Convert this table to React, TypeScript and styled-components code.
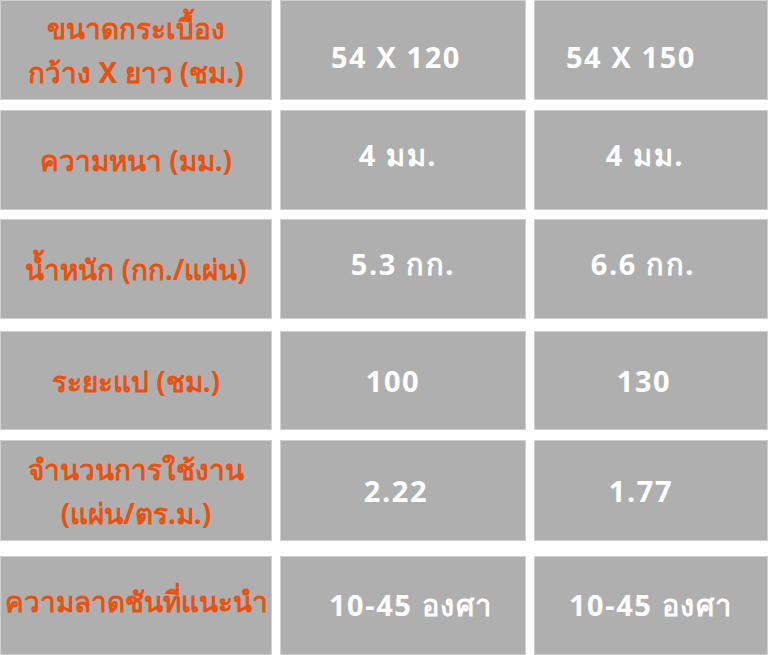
import styled, { createGlobalStyle } from "styled-components";

const GlobalStyle = createGlobalStyle`
  html, body {
    margin: 0;
    padding: 0;
    background: #ffffff;
  }
`;

const Table = styled.div`
  width: 768px;
  height: 655px;
  display: flex;
  flex-direction: column;
  background-color: #ffffff;
  overflow: hidden;
`;

const Row = styled.div<{ $top: number; $h: number }>`
  display: grid;
  grid-template-columns: 272px 246px 1fr;
  column-gap: 8px;
  margin-top: ${(p) => p.$top}px;
  height: ${(p) => p.$h}px;
`;

const Cell = styled.div<{ $dx?: number; $dy?: number }>`
  display: flex;
  flex-direction: column;
  justify-content: center;
  align-items: center;
  background-color: #afafaf;
  box-shadow: inset 0 0 0 1px #cfcfcf;
  padding-left: ${(p) => (p.$dx && p.$dx > 0 ? p.$dx * 2 : 0)}px;
  padding-right: ${(p) => (p.$dx && p.$dx < 0 ? -p.$dx * 2 : 0)}px;
  padding-top: ${(p) => (p.$dy && p.$dy > 0 ? p.$dy * 2 : 0)}px;
  padding-bottom: ${(p) => (p.$dy && p.$dy < 0 ? -p.$dy * 2 : 0)}px;
`;

const Label = styled.span`
  font-family: "Noto Sans", "Open Sans", sans-serif;
  font-weight: 700;
  font-size: 28px;
  line-height: 44px;
  color: #e8520f;
  white-space: nowrap;
`;

const Value = styled.span`
  font-family: "Open Sans", "Noto Sans", sans-serif;
  font-weight: 700;
  font-size: 29px;
  letter-spacing: 1.6px;
  color: #ffffff;
  white-space: nowrap;
`;

type RowData = {
  top: number;
  h: number;
  label: string[];
  a: string;
  b: string;
  dy?: number;
  labelDy?: number;
  adx?: number;
  bdx?: number;
};

const rows: RowData[] = [
  { top: 0, h: 100, label: ["ขนาดกระเบื้อง", "กว้าง X ยาว (ชม.)"], a: "54 X 120", b: "54 X 150", dy: 6, adx: -7, bdx: -20 },
  { top: 10, h: 100, label: ["ความหนา (มม.)"], a: "4 มม.", b: "4 มม.", dy: -4, adx: -5, bdx: -6 },
  { top: 9, h: 100, label: ["น้ำหนัก (กก./แผ่น)"], a: "5.3 กก.", b: "6.6 กก.", dy: -4, bdx: -8 },
  { top: 12, h: 99, label: ["ระยะแป (ชม.)"], a: "100", b: "130", adx: -10, bdx: -7 },
  { top: 10, h: 101, label: ["จำนวนการใช้งาน", "(แผ่น/ตร.ม.)"], a: "2.22", b: "1.77", adx: -7, bdx: -10 },
  { top: 15, h: 99, label: ["ความลาดชันที่แนะนำ"], a: "10-45 องศา", b: "10-45 องศา", labelDy: -5, adx: 8 },
];

const App = () => {
  return (
    <>
      <GlobalStyle />
      <Table>
        {rows.map((r, i) => (
          <Row key={i} $top={r.top} $h={r.h}>
            <Cell $dy={r.labelDy}>
              {r.label.map((l) => (
                <Label key={l}>{l}</Label>
              ))}
            </Cell>
            <Cell $dx={r.adx} $dy={r.dy}>
              <Value>{r.a}</Value>
            </Cell>
            <Cell $dx={r.bdx} $dy={r.dy}>
              <Value>{r.b}</Value>
            </Cell>
          </Row>
        ))}
      </Table>
    </>
  );
};

export default App;
